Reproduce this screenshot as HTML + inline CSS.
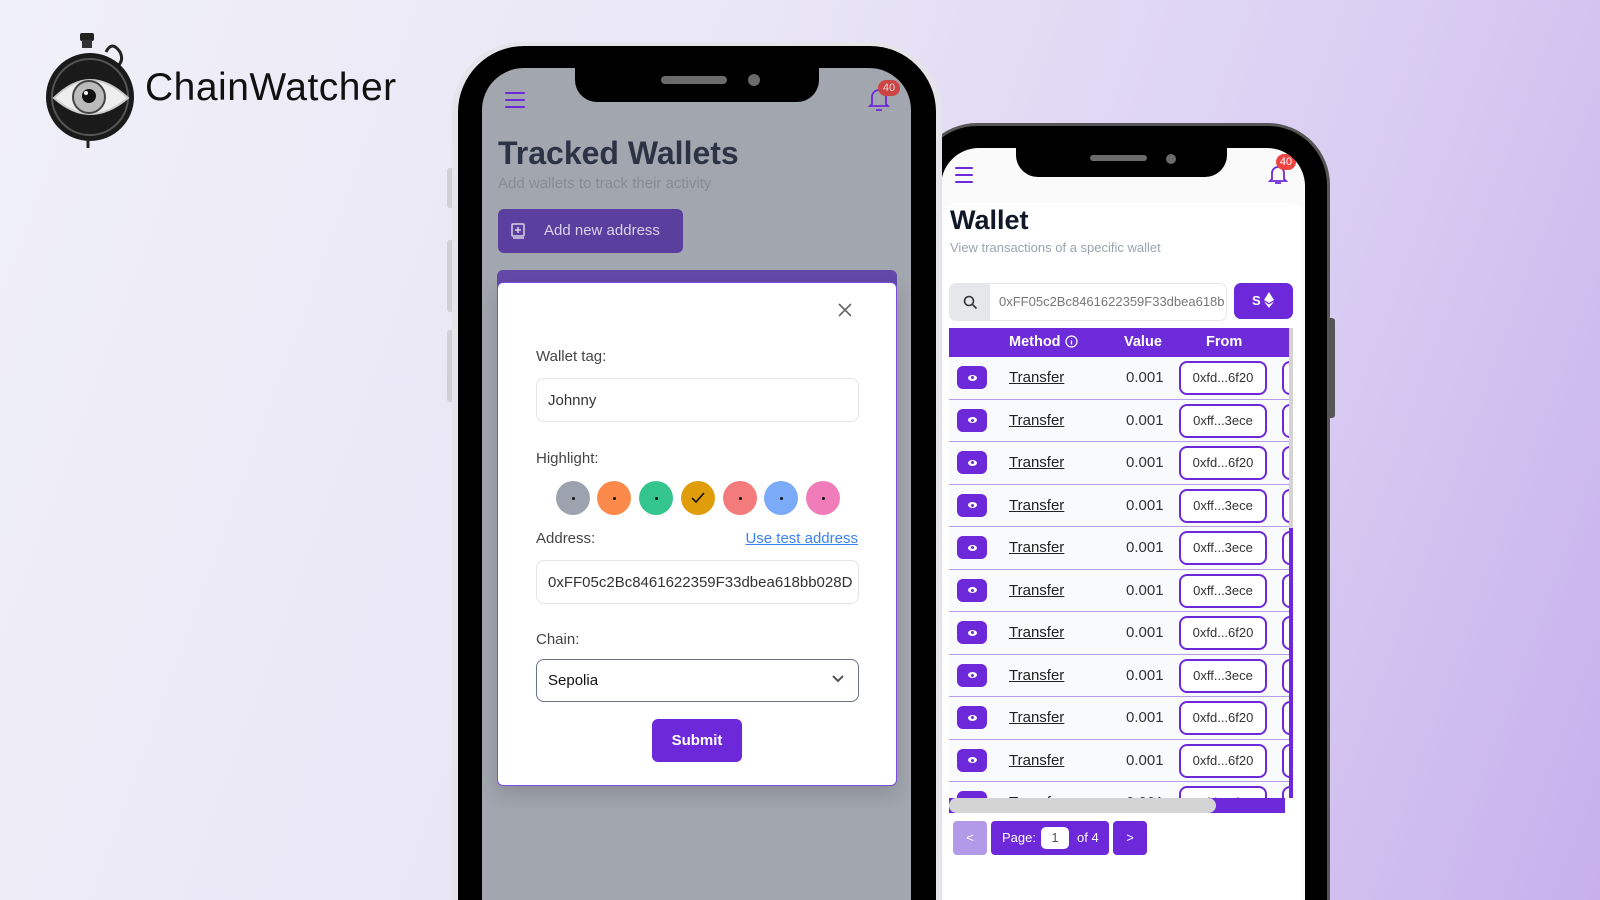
<!DOCTYPE html>
<html><head><meta charset="utf-8"><style>
*{box-sizing:border-box;margin:0;padding:0}
html,body{width:1600px;height:900px;overflow:hidden}
body{position:relative;font-family:"Liberation Sans","DejaVu Sans",sans-serif;background:linear-gradient(110deg,#f0f0f8 0%,#e9e6f6 40%,#d9ccf2 75%,#c7b0ec 100%)}
#wrap{position:absolute;left:0;top:0;width:1600px;height:900px;overflow:hidden}
.abs{position:absolute}
.logo-text{left:145px;top:66px;font-size:39px;color:#111;letter-spacing:0.5px}
.p2{left:915px;top:123px;width:415px;height:777px;background:#000;border-radius:62px 62px 0 0;border:3px solid #555;border-bottom:0}
.p2s{left:941px;top:148px;width:364px;height:752px;background:#fafafb;border-radius:38px 38px 0 0;overflow:hidden}
.p2btn{left:1327px;top:318px;width:8px;height:100px;background:#555;border-radius:0 3px 3px 0}
.p1rim{left:452px;top:42px;width:490px;height:858px;background:#e4e4ea;border-radius:70px 70px 0 0}
.p1{left:458px;top:46px;width:478px;height:854px;background:#000;border-radius:66px 66px 0 0}
.p1s{left:482px;top:68px;width:429px;height:832px;background:#a2a6ae;border-radius:42px 42px 0 0;overflow:hidden}
.side{background:#d0d0d6;width:6px;border-radius:3px 0 0 3px}
.notch{background:#000}
.spk{background:#6b6b6b;border-radius:4px}
.cam{background:#6b6b6b;border-radius:50%}
.ham span{display:block;height:2px;background:#6d28d9;margin-bottom:5px;border-radius:1px}
.badge{background:#ef4444;color:#fff;font-size:11px;text-align:center;border-radius:10px;line-height:16px}
.lbl{font-size:15px;color:#444}
.inp{border:1px solid #e3e3e8;border-radius:8px;background:#fff;font-size:15px;color:#333;padding-left:11px;display:flex;align-items:center}
.dot{width:34px;height:34px;border-radius:50%;display:flex;align-items:center;justify-content:center}
.dot i{width:3px;height:3px;background:#111;border-radius:50%}
.row{position:absolute;left:0;width:345px;height:42.5px;border-bottom:1.5px solid #b59be8;background:#f9fafb}
.eye{position:absolute;left:8px;top:9px;width:30px;height:23px;background:#6d28d9;border-radius:6px;display:flex;align-items:center;justify-content:center}
.eye i{width:9px;height:6px;background:#fff;border-radius:50%;position:relative}
.eye i:after{content:"";position:absolute;left:3px;top:1.5px;width:3px;height:3px;background:#6d28d9;border-radius:50%}
.tr{position:absolute;left:60px;top:12px;font-size:15px;color:#222;text-decoration:underline}
.val{position:absolute;left:177px;top:12px;font-size:15px;color:#333}
.pill{position:absolute;left:230px;top:4px;width:88px;height:34px;border:2px solid #6d28d9;border-radius:8px;background:#fff;font-size:13px;color:#333;text-align:center;line-height:30px}
.pill2{position:absolute;left:333px;top:4px;width:30px;height:34px;border:2px solid #6d28d9;border-radius:8px;background:#fff}
</style></head><body><div id="wrap">
<svg class="abs" style="left:44px;top:30px" width="94" height="122" viewBox="0 0 94 122">
<rect x="36" y="3" width="14" height="8" rx="2" fill="#222"/>
<rect x="38" y="10" width="10" height="8" fill="#333"/>
<path d="M62 22 q6-12 14 0 q4 8 -2 14" stroke="#222" stroke-width="3" fill="none"/>
<circle cx="46" cy="67" r="44" fill="#1a1a1a"/>
<circle cx="46" cy="67" r="38" fill="none" stroke="#555" stroke-width="2"/>
<path d="M10 68 Q46 32 84 68 Q46 100 10 68Z" fill="#eee" stroke="#ccc" stroke-width="2"/>
<circle cx="45" cy="67" r="16" fill="#bbb" stroke="#444" stroke-width="2"/>
<circle cx="45" cy="66" r="7" fill="#111"/>
<circle cx="42" cy="63" r="2" fill="#fff"/>
<path d="M44 108 l0 10" stroke="#222" stroke-width="3"/>
</svg>
<div class="abs logo-text">ChainWatcher</div>

<div class="abs p2"></div>
<div class="abs p2btn"></div>
<div class="abs p2s">
  <div class="abs notch" style="left:75px;top:-2px;width:211px;height:31px;border-radius:0 0 22px 22px"></div>
  <div class="abs spk" style="left:149px;top:7px;width:57px;height:6px"></div>
  <div class="abs cam" style="left:225px;top:6px;width:10px;height:10px"></div>
  <div class="abs ham" style="left:14px;top:19px;width:18px"><span></span><span></span><span></span></div>
  <svg class="abs" style="left:325px;top:14px" width="24" height="24" viewBox="0 0 24 24"><path d="M6 17V11a6 6 0 0 1 12 0v6l2 2H4z M9 21h6" stroke="#6d28d9" stroke-width="1.8" fill="none"/></svg>
  <div class="abs badge" style="left:335px;top:6px;width:20px">40</div>
  <div class="abs" style="left:2px;top:55px;width:360px;height:697px;background:#fff;border-radius:12px 12px 0 0"></div>
  <div class="abs" style="left:9px;top:57px;font-size:27px;font-weight:bold;color:#111827">Wallet</div>
  <div class="abs" style="left:9px;top:92px;font-size:13px;color:#9ca3af">View transactions of a specific wallet</div>
  <div class="abs" style="left:8px;top:135px;width:278px;height:38px;border:1px solid #e5e7eb;border-radius:7px;background:#fff;overflow:hidden">
    <div class="abs" style="left:0;top:0;width:40px;height:38px;background:#e5e7eb"></div>
    <svg class="abs" style="left:13px;top:11px" width="15" height="15" viewBox="0 0 15 15"><circle cx="6" cy="6" r="4.5" stroke="#333" stroke-width="1.6" fill="none"/><path d="M9.5 9.5l4 4" stroke="#333" stroke-width="1.6"/></svg>
    <div class="abs" style="left:49px;top:10px;font-size:13px;color:#777;white-space:nowrap">0xFF05c2Bc8461622359F33dbea618b</div>
  </div>
  <div class="abs" style="left:293px;top:135px;width:59px;height:36px;background:#6d28d9;border-radius:7px;color:#fff;font-size:13px;font-weight:bold;line-height:36px;padding-left:18px">S<svg style="vertical-align:-3px;margin-left:3px" width="10" height="16" viewBox="0 0 10 16"><path d="M5 0L0 8l5 3 5-3z M0 9.5l5 6.5 5-6.5-5 3z" fill="#fff"/></svg></div>
  <div class="abs" style="left:8px;top:180px;width:344px;height:470px;overflow:hidden">
    <div class="abs" style="left:0;top:0;width:345px;height:29px;background:#6d2bd9;color:#fff;font-size:14.5px;font-weight:bold">
      <span class="abs" style="left:60px;top:6px">Method <svg style="vertical-align:-2px" width="13" height="13" viewBox="0 0 13 13"><circle cx="6.5" cy="6.5" r="5.5" stroke="#fff" fill="none" stroke-width="1.2"/><path d="M6.5 5.5v4M6.5 3.5v.5" stroke="#fff" stroke-width="1.3"/></svg></span>
      <span class="abs" style="left:175px;top:6px">Value</span>
      <span class="abs" style="left:257px;top:6px">From</span>
    </div>
    <div class="abs" style="left:0;top:29px;width:345px;height:441px;overflow:hidden">
      <div class="row" style="top:0"><div class="eye"><i></i></div><span class="tr">Transfer</span><span class="val">0.001</span><div class="pill">0xfd...6f20</div><div class="pill2"></div></div>
      <div class="row" style="top:42.5px"><div class="eye"><i></i></div><span class="tr">Transfer</span><span class="val">0.001</span><div class="pill">0xff...3ece</div><div class="pill2"></div></div>
      <div class="row" style="top:85px"><div class="eye"><i></i></div><span class="tr">Transfer</span><span class="val">0.001</span><div class="pill">0xfd...6f20</div><div class="pill2"></div></div>
      <div class="row" style="top:127.5px"><div class="eye"><i></i></div><span class="tr">Transfer</span><span class="val">0.001</span><div class="pill">0xff...3ece</div><div class="pill2"></div></div>
      <div class="row" style="top:170px"><div class="eye"><i></i></div><span class="tr">Transfer</span><span class="val">0.001</span><div class="pill">0xff...3ece</div><div class="pill2"></div></div>
      <div class="row" style="top:212.5px"><div class="eye"><i></i></div><span class="tr">Transfer</span><span class="val">0.001</span><div class="pill">0xff...3ece</div><div class="pill2"></div></div>
      <div class="row" style="top:255px"><div class="eye"><i></i></div><span class="tr">Transfer</span><span class="val">0.001</span><div class="pill">0xfd...6f20</div><div class="pill2"></div></div>
      <div class="row" style="top:297.5px"><div class="eye"><i></i></div><span class="tr">Transfer</span><span class="val">0.001</span><div class="pill">0xff...3ece</div><div class="pill2"></div></div>
      <div class="row" style="top:340px"><div class="eye"><i></i></div><span class="tr">Transfer</span><span class="val">0.001</span><div class="pill">0xfd...6f20</div><div class="pill2"></div></div>
      <div class="row" style="top:382.5px"><div class="eye"><i></i></div><span class="tr">Transfer</span><span class="val">0.001</span><div class="pill">0xfd...6f20</div><div class="pill2"></div></div>
      <div class="row" style="top:425px"><div class="eye"><i></i></div><span class="tr">Transfer</span><span class="val">0.001</span><div class="pill">0xfd...6f20</div><div class="pill2"></div></div>
    </div>
    <div class="abs" style="left:340px;top:0;width:5px;height:200px;background:#d4d4d4"></div>
    <div class="abs" style="left:340px;top:200px;width:5px;height:270px;background:#6d28d9"></div>
  </div>
  <div class="abs" style="left:8px;top:650px;width:336px;height:15px;background:#6d28d9"></div>
  <div class="abs" style="left:8px;top:650px;width:267px;height:15px;background:#d4d4d4;border-radius:8px"></div>
  <div class="abs" style="left:12px;top:673px;width:34px;height:34px;background:#b39ae8;border-radius:4px;color:#fff;text-align:center;line-height:33px;font-size:13px">&lt;</div>
  <div class="abs" style="left:50px;top:673px;width:118px;height:34px;background:#6d28d9;border-radius:4px;color:#fff;font-size:13px">
    <span class="abs" style="left:11px;top:9px">Page:</span>
    <div class="abs" style="left:50px;top:6px;width:28px;height:22px;background:#fff;border-radius:5px;color:#555;text-align:center;line-height:22px">1</div>
    <span class="abs" style="left:86px;top:9px">of 4</span>
  </div>
  <div class="abs" style="left:172px;top:673px;width:34px;height:34px;background:#6d28d9;border-radius:4px;color:#fff;text-align:center;line-height:33px;font-size:13px">&gt;</div>
</div>

<div class="abs side" style="left:447px;top:168px;height:40px"></div>
<div class="abs side" style="left:447px;top:240px;height:72px"></div>
<div class="abs side" style="left:447px;top:330px;height:72px"></div>
<div class="abs p1rim"></div>
<div class="abs p1"></div>
<div class="abs p1s">
  <div class="abs notch" style="left:93px;top:-2px;width:244px;height:36px;border-radius:0 0 22px 22px"></div>
  <div class="abs spk" style="left:179px;top:8px;width:66px;height:8px"></div>
  <div class="abs cam" style="left:266px;top:6px;width:12px;height:12px"></div>
  <div class="abs ham" style="left:23px;top:24px;width:20px"><span></span><span></span><span></span></div>
  <svg class="abs" style="left:384px;top:17px" width="26" height="28" viewBox="0 0 26 28"><path d="M6 19V12a7 7 0 0 1 14 0v7l2 2H4z M10 25h6" stroke="#6d28d9" stroke-width="1.8" fill="none"/></svg>
  <div class="abs badge" style="left:396px;top:12px;width:22px;background:#c44;color:#ddd">40</div>
  <div class="abs" style="left:16px;top:67px;font-size:32px;font-weight:bold;color:#2c3345">Tracked Wallets</div>
  <div class="abs" style="left:16px;top:107px;font-size:15px;color:#888b94">Add wallets to track their activity</div>
  <div class="abs" style="left:16px;top:141px;width:185px;height:44px;background:#5b3f9f;border-radius:6px;color:#d8d2e8;font-size:15px;line-height:44px;padding-left:46px">Add new address</div>
  <svg class="abs" style="left:29px;top:155px" width="14" height="16" viewBox="0 0 14 16"><rect x="1" y="1" width="12" height="12" rx="1" stroke="#d8d2e8" stroke-width="1.5" fill="none"/><path d="M7 4v6M4 7h6M2 15h11" stroke="#d8d2e8" stroke-width="1.5"/></svg>
  <div class="abs" style="left:15px;top:202px;width:400px;height:20px;background:#6448a8;border-radius:6px 6px 0 0"></div>
  <div class="abs" style="left:15px;top:214px;width:400px;height:504px;background:#fff;border:1.5px solid #7c4ddb;border-radius:6px;box-shadow:0 8px 20px rgba(0,0,0,.15)">
    <svg class="abs" style="left:340px;top:20px" width="14" height="14" viewBox="0 0 14 14"><path d="M1 1l12 12M13 1L1 13" stroke="#666" stroke-width="1.6"/></svg>
    <div class="abs lbl" style="left:38px;top:65px">Wallet tag:</div>
    <div class="abs inp" style="left:38px;top:95px;width:323px;height:44px">Johnny</div>
    <div class="abs lbl" style="left:38px;top:167px">Highlight:</div>
    <div class="abs dot" style="left:58px;top:198px;background:#9ca3af"><i></i></div>
    <div class="abs dot" style="left:99px;top:198px;background:#fb8a4a"><i></i></div>
    <div class="abs dot" style="left:141px;top:198px;background:#34c48e"><i></i></div>
    <div class="abs dot" style="left:183px;top:198px;background:#e09d0b"><svg width="14" height="12" viewBox="0 0 14 12"><path d="M1 6l4 4 8-9" stroke="#111" stroke-width="1.6" fill="none"/></svg></div>
    <div class="abs dot" style="left:225px;top:198px;background:#f47b7b"><i></i></div>
    <div class="abs dot" style="left:266px;top:198px;background:#7aaaf8"><i></i></div>
    <div class="abs dot" style="left:308px;top:198px;background:#f07db9"><i></i></div>
    <div class="abs lbl" style="left:38px;top:247px">Address:</div>
    <div class="abs" style="right:38px;top:247px;font-size:15px;color:#3b82f6;text-decoration:underline">Use test address</div>
    <div class="abs inp" style="left:38px;top:277px;width:323px;height:44px;white-space:nowrap;overflow:hidden">0xFF05c2Bc8461622359F33dbea618bb028D</div>
    <div class="abs lbl" style="left:38px;top:348px">Chain:</div>
    <div class="abs inp" style="left:38px;top:376px;width:323px;height:43px;border:1.5px solid #6b7280;color:#111">Sepolia</div>
    <svg class="abs" style="left:334px;top:392px" width="12" height="8" viewBox="0 0 12 8"><path d="M1 1l5 5 5-5" stroke="#555" stroke-width="2" fill="none"/></svg>
    <div class="abs" style="left:154px;top:436px;width:90px;height:43px;background:#6d28d9;border-radius:6px;color:#fff;font-size:15px;font-weight:bold;text-align:center;line-height:43px">Submit</div>
  </div>
</div>
</div></body></html>
